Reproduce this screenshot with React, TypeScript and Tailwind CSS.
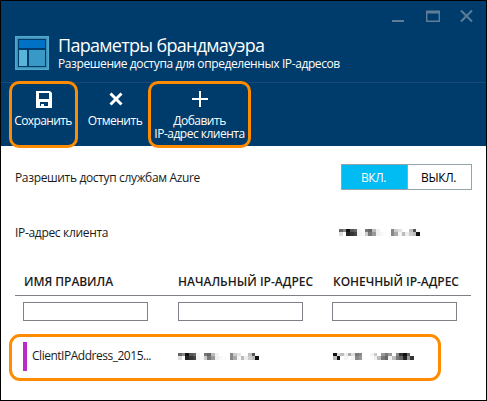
import React from "react";

type MosaicProps = { top: string[]; bottom: string[] };

// Redacted value: a strip of grey blocks, two rows tall.
function Mosaic({ top, bottom }: MosaicProps) {
  const w = 81 / top.length;
  return (
    <svg width="81" height="7" viewBox="0 0 81 7" className="block" shapeRendering="crispEdges">
      {top.map((c, i) => (
        <rect key={"t" + i} x={i * w} y="0" width={w} height="3" fill={"#" + c + c + c} />
      ))}
      {bottom.map((c, i) => (
        <rect key={"b" + i} x={i * w} y="3" width={w} height="4" fill={"#" + c + c + c} />
      ))}
    </svg>
  );
}

const startTop = "66 88 11 55 66 f4 ff 77 66 bb f0 ff ff ff 88 cc e4 ff ff bb 55 f8".split(" ");
const startBottom = "dd ff 22 33 44 f4 f8 cc 77 99 f0 f8 fc ff 88 aa f4 bb ee cc bb 11".split(" ");
const endTop = "11 dd bb ee aa dd 77 88 ff ff f4 cc ff 99 77 99 ff 88 33 11 66 ff".split(" ");
const endBottom = "bb 11 ff f4 fc f4 88 99 fc ff fc f0 bb 77 66 f0 bb 77 66 22 99 33".split(" ");

function Field() {
  return <input className="block h-[19px] w-[125px] border border-[#7e8188] bg-white outline-none" />;
}

export default function App() {
  return (
    <div className="relative flex h-[401px] w-[487px] flex-col overflow-hidden border border-black bg-white font-['Open_Sans','Noto_Sans',sans-serif] text-xs text-[#1b1b1b]">
      <header className="h-[145px] shrink-0 bg-[#003c6b] text-white">
        <div className="flex h-[35px] justify-end pt-2 pr-[11px]">
          <svg width="84" height="14" fill="none" stroke="#5f7d99">
            <path d="M1 12h12" strokeWidth="2" />
            <path d="M35.7 2v10.3h12.6V2" strokeWidth="1.4" />
            <path d="M35 3h14" strokeWidth="3" />
            <path d="M70 1.5l11 11M81 1.5l-11 11" strokeWidth="2" />
          </svg>
        </div>
        <div className="flex h-[46px] gap-[9px] pl-[14px]">
          <svg width="34" height="34" className="shrink-0">
            <rect width="34" height="34" fill="#4fa8cf" />
            <rect x="1.5" y="1.5" width="31" height="31" fill="#3d8fb8" />
            <rect x="3" y="3" width="28" height="28" fill="#003c6b" />
            <rect x="4" y="4" width="26" height="8" fill="#0072c6" />
            <rect x="4" y="14" width="8" height="16" fill="#59b4d9" />
            <rect x="14" y="14" width="16" height="16" fill="#3999c6" />
          </svg>
          <div className="whitespace-nowrap">
            <h1 className="h-[21px] text-[18px] leading-[18px] tracking-[-0.7px]">Параметры брандмауэра</h1>
            <p className="leading-[14px] tracking-[-0.4px]">Разрешение доступа для определенных IP-адресов</p>
          </div>
        </div>
        <div className="flex h-[64px] border-t border-[#18487a] pl-2 text-center leading-[13px] whitespace-nowrap">
          <div className="flex w-[70px] flex-col items-center pt-[8px]">
            <svg width="16" height="17">
              <path d="M0 0h14l2 2v15H0zM3 2v6h10V2zM4 11v4h1v-2h3v2h4v-4z" fill="white" fillRule="evenodd" />
            </svg>
            <span className="mt-[6px] mr-[2px] tracking-[-0.6px]">Сохранить</span>
          </div>
          <div className="flex w-[71px] flex-col items-center pt-[9px]">
            <svg width="14" height="14" className="relative left-px">
              <path d="M1.5 1.5l11 11M12.5 1.5l-11 11" stroke="white" strokeWidth="3" />
            </svg>
            <span className="mt-[8px] ml-px tracking-[-0.5px]">Отменить</span>
          </div>
          <div className="flex w-[100px] flex-col items-center pt-[8px]">
            <svg width="16" height="16">
              <path d="M8 0v16M0 8h16" stroke="white" strokeWidth="2" />
            </svg>
            <span className="mt-[7px] mr-px tracking-[-0.5px]">Добавить</span>
            <span className="mr-px tracking-[-0.5px]">IP-адрес клиента</span>
          </div>
        </div>
      </header>

      <main className="flex flex-col pl-[14px] whitespace-nowrap">
        <div className="mt-[18px] flex h-[26px] items-center justify-between pr-[14px]">
          <span className="pt-[2px] tracking-[-0.35px]">Разрешить доступ службам Azure</span>
          <div className="flex h-[26px] w-[131px] border border-[#93a5ab] text-center leading-[26px]">
            <div className="w-[66px] border-r border-[#93a5ab] bg-[#00bcf2] pr-[2px] tracking-[-0.4px] text-white">ВКЛ.</div>
            <div className="flex-1 pr-[2px] tracking-[-0.4px] text-black">ВЫКЛ.</div>
          </div>
        </div>
        <div className="mt-[32px] flex h-[20px] items-center justify-between pr-[66px]">
          <span className="pt-px tracking-[-0.32px]">IP-адрес клиента</span>
          <Mosaic top={startTop} bottom={startBottom} />
        </div>
        <div className="mt-[30px] grid h-[24px] w-[456px] grid-cols-[154px_155px_1fr] border-b border-[#7e8188] pl-[9px] leading-5 font-semibold">
          <span className="tracking-[-0.05px]">ИМЯ ПРАВИЛА</span>
          <span>НАЧАЛЬНЫЙ IP-АДРЕС</span>
          <span className="tracking-[-0.05px]">КОНЕЧНЫЙ IP-АДРЕС</span>
        </div>
        <div className="mt-[6px] grid grid-cols-[155px_154px_1fr] pl-[8px]">
          <Field />
          <Field />
          <Field />
        </div>
        <div className="mt-[21px] grid h-[29px] grid-cols-[155px_155px_1fr] items-center pl-[8px]">
          <div className="flex h-[29px] items-center border-l-4 border-[#ba2bc9] pl-[5px]">
            <span className="-mt-px tracking-[-0.48px]">ClientIPAddress_2015...</span>
          </div>
          <Mosaic top={startTop} bottom={startBottom} />
          <Mosaic top={endTop} bottom={endBottom} />
        </div>
      </main>

      <div className="absolute top-[80px] left-[8px] h-[67px] w-[69px] rounded-[10px] border-3 border-[#ff8c00]" />
      <div className="absolute top-[80px] left-[147px] h-[67px] w-[103px] rounded-[10px] border-3 border-[#ff8c00]" />
      <div className="absolute top-[333px] left-[8px] h-[47px] w-[432px] rounded-[11px] border-3 border-[#ff8c00]" />
    </div>
  );
}
